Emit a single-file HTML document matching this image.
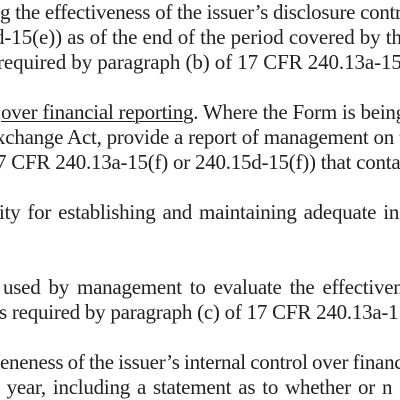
<!DOCTYPE html>
<html><head><meta charset="utf-8"><style>
html,body{margin:0;padding:0;background:#fff;}
body{width:400px;height:400px;overflow:hidden;position:relative;}
#w{position:absolute;left:0;top:0;width:400px;height:400px;overflow:hidden;}
.l{position:absolute;white-space:nowrap;font-family:"Liberation Serif",serif;font-size:21px;color:#231f20;letter-spacing:-0.25px;line-height:25px;}
u{text-decoration:underline;text-underline-offset:2px;text-decoration-thickness:1px;}
</style></head><body><div id="w">
<div class="l" style="top:0;left:0;letter-spacing:-0.3px">g the effectiveness of the issuer’s disclosure contr</div>
<div class="l" style="top:25px;left:-6px;letter-spacing:-0.1px">d-15(e)) as of the end of the period covered by th</div>
<div class="l" style="top:50px;left:-3px;letter-spacing:-0.1px">required by paragraph (b) of 17 CFR 240.13a-15</div>
<div class="l" style="top:100px;left:1px"><u style="margin-left:-4px;padding-left:4px">over financial reporting</u>. Where the Form is being</div>
<div class="l" style="top:125px;left:-5px">xchange Act, provide a report of management on t</div>
<div class="l" style="top:150px;left:-4px">7 CFR 240.13a-15(f) or 240.15d-15(f)) that conta</div>
<div class="l" style="top:200px;left:-1px;word-spacing:2px">ity for establishing and maintaining adequate in</div>
<div class="l" style="top:275px;left:3px;word-spacing:3px">used by management to evaluate the effectiven</div>
<div class="l" style="top:300px;left:-1px">s required by paragraph (c) of 17 CFR 240.13a-1</div>
<div class="l" style="top:350px;left:0;letter-spacing:-0.3px;word-spacing:-0.5px">eneness of the issuer’s internal control over financ</div>
<div class="l" style="top:375px;left:-6px;word-spacing:2px">l year, including a statement as to whether or n</div>
</div></body></html>
